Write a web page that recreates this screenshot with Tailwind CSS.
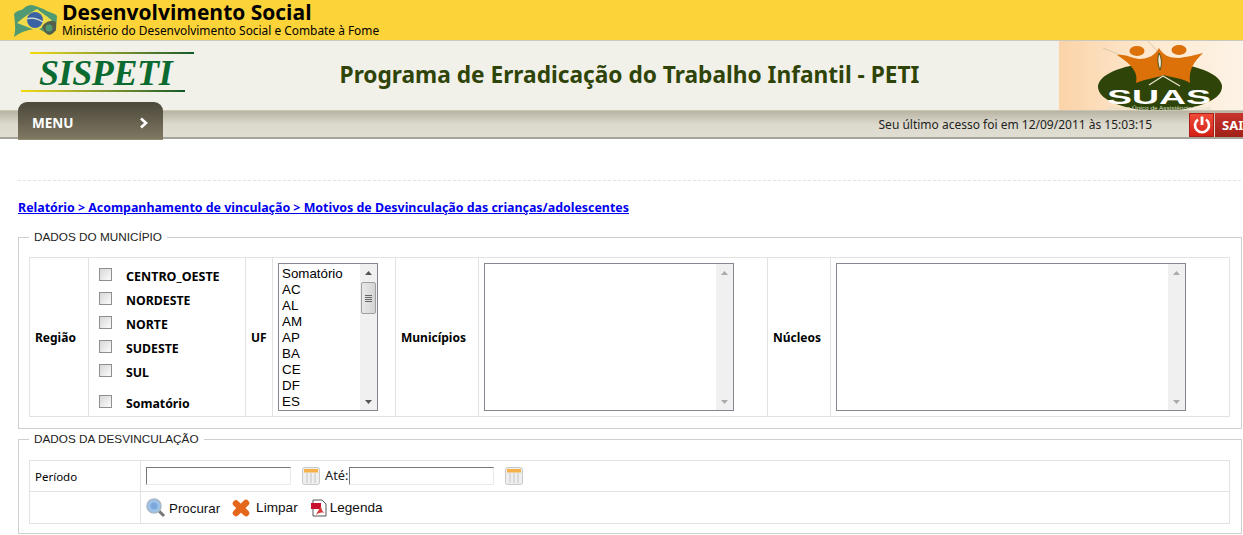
<!DOCTYPE html>
<html lang="pt">
<head>
<meta charset="utf-8">
<script src="https://cdn.jsdelivr.net/npm/@tailwindcss/browser@4"></script>
</head>
<body class="bg-white overflow-hidden h-[535px] font-['Noto_Sans',sans-serif] text-[12px] text-black">
<header class="h-[41px] bg-[#fdd33a] border-b border-[#c9c9bd] flex pl-[14px]">
  <svg width="44" height="36" viewBox="0 0 44 36" class="mt-[2px]">
    <path d="M0 12 C3 8 6 9 9 7 C12 4 14 3 18 3 C24 5 28 6 33 9 C37 11 41 11 43 14 L42 28 C39 31 37 34 33 32 C28 28 24 26 20 27 C13 28 7 30 0 35 C2 28 1 20 0 12Z" fill="#4f9a73"/>
    <path d="M3 21 C10 15 16 11 23 7 C29 12 35 15 38 19 C32 23 27 26 23 29 C17 26 10 24 3 21Z" fill="#efdc4a"/>
    <circle cx="21" cy="18" r="8" fill="#3a62a5"/>
    <path d="M13 17 C18 15 24 17 29 20" stroke="#dfe6d0" stroke-width="1.2" fill="none"/>
    <path d="M28 25 C31 19 38 18 42 20 L42 28 C39 31 37 34 33 32 C31 30 29 28 28 25Z" fill="#55604c"/>
    <circle cx="35" cy="26" r="3.5" fill="#4f9a73"/>
  </svg>
  <div class="ml-[4px] pt-[1px]">
    <div class="font-['Open_Sans',sans-serif] font-bold text-[21px] leading-[22px] whitespace-nowrap">Desenvolvimento Social</div>
    <div class="text-[11.9px] leading-[14px] whitespace-nowrap">Ministério do Desenvolvimento Social e Combate à Fome</div>
  </div>
</header>
<section class="h-[69px] bg-[#f2f1e9] flex relative">
  <div class="w-[200px] shrink-0 pl-[21px] pt-[11px]">
    <div class="w-[164px] h-[2px] ml-[9px] bg-gradient-to-r from-[#f2dc00] to-[#0b5a2a]"></div>
    <div class="font-['Liberation_Serif',serif] italic font-bold text-[36px] leading-[36px] pt-px text-[#0b6a30] ml-[18px] h-[36px] tracking-[-0.4px]">SISPETI</div>
    <div class="w-[164px] h-[2px] bg-gradient-to-r from-[#f2dc00] to-[#0b5a2a]"></div>
  </div>
  <div class="flex-1 text-center font-bold text-[22.7px] leading-[28px] text-[#2f4408] pt-[20px] whitespace-nowrap">Programa de Erradicação do Trabalho Infantil - PETI</div>
  <div class="w-[184px] shrink-0 bg-gradient-to-r from-[#fbd3a8] via-[#fde9d0] to-[#fdf3e6] overflow-hidden">
    <svg width="184" height="69" viewBox="0 0 184 69">
      <path d="M44 7 L64 15 M89 0 L100 12" stroke="#d9c7a8" stroke-width="1" fill="none"/>
      <ellipse cx="101" cy="46" rx="62" ry="24" fill="#2f4408"/>
      <path d="M58 14 C66 13 72 17 80 18 C90 18 96 14 100 7 C104 14 110 17 120 17 C128 16 136 14 144 12 C136 20 129 28 131 42 C123 37 114 37 105 34 C97 37 86 38 77 42 C80 30 70 22 58 14Z" fill="#dc7009"/>
      <ellipse cx="78" cy="10" rx="7.5" ry="5" fill="#dc7009"/>
      <ellipse cx="120" cy="9" rx="7.5" ry="5" fill="#dc7009"/>
      <path d="M100 12 C98 18 99 24 101 29 C103 24 103 18 100 12Z" fill="#f5ead6" stroke="#2f4408" stroke-width="0.8"/>
      <path d="M90 44 L104 35 L121 45" stroke="#e8e2c8" stroke-width="1.3" fill="none"/>
      <text x="100" y="63" text-anchor="middle" font-family="Liberation Sans" font-weight="700" font-size="21" fill="#fff" textLength="104" lengthAdjust="spacingAndGlyphs">SUAS</text>
      <text x="100" y="68.5" text-anchor="middle" font-family="Liberation Sans" font-size="5" fill="#dfe0cc" textLength="104" lengthAdjust="spacingAndGlyphs">Sistema Único de Assistência Social</text>
    </svg>
  </div>
</section>
<nav class="h-[29px] border-t border-[#c9c6b4] border-b-2 border-b-[#a5a49c] bg-gradient-to-b from-[#b9b3a2] via-[#dcd9cd] to-[#e0ddd2] relative flex items-center justify-end">
  <a class="absolute left-[18px] top-[-9px] w-[145px] h-[38px] rounded-t-[9px] bg-gradient-to-b from-[#4c483a] to-[#7f7862] border-b border-[#8f8a70] text-white font-bold text-[13.5px] flex items-center justify-between pl-[14px] pr-[14px] pt-[5px]">
    <span>MENU</span>
    <svg width="10" height="12" viewBox="0 0 10 12"><path d="M2 1.5 L7 6 L2 10.5" fill="none" stroke="#fff" stroke-width="2.6"/></svg>
  </a>
  <span class="mr-[37px] text-[12px] text-[#222] mt-[2px]">Seu último acesso foi em 12/09/2011 às 15:03:15</span>
  <span class="flex h-[24px] w-[54px] shrink-0 mt-[1px] overflow-hidden">
    <span class="w-[25px] shrink-0 bg-gradient-to-b from-[#f04a38] to-[#d41f16] border border-[#a82018] flex items-center justify-center">
      <svg width="20" height="20" viewBox="0 0 20 20"><path d="M6 4.5 A7 7 0 1 0 14 4.5" fill="none" stroke="#fff" stroke-width="2.6"/><path d="M10 1.5 V10" stroke="#fff" stroke-width="2.8"/></svg>
    </span>
    <span class="min-w-0 w-[29px] ml-px bg-gradient-to-b from-[#c8352c] to-[#a02018] text-white font-bold text-[13px] pl-[7px] leading-[24px] whitespace-nowrap overflow-hidden">SAIR</span>
  </span>
</nav>
<main class="px-[18px]">
  <div class="mt-[41px] -mr-[16px] border-t border-dashed border-[#e2e2e2]"></div>
  <a class="block mt-[18px] text-[#0000ee] underline font-bold text-[12.4px] leading-[17px] whitespace-nowrap">Relatório &gt; Acompanhamento de vinculação &gt; Motivos de Desvinculação das crianças/adolescentes</a>

  <fieldset class="mt-[14px] w-[1224px] h-[199px] border border-[#cfcfcf] px-[10px] pt-[12px]">
    <legend class="px-[5px] pb-[2px] ml-0 font-['Liberation_Sans',sans-serif] text-[11.75px] leading-[13px] text-[#222]">DADOS DO MUNICÍPIO</legend>
    <table class="table-fixed border-collapse w-[1201px] h-[160px] font-bold">
      <colgroup><col class="w-[59px]"><col class="w-[157px]"><col class="w-[27px]"><col class="w-[123px]"><col class="w-[83px]"><col class="w-[289px]"><col class="w-[63px]"><col></colgroup>
      <tr>
        <td class="border border-[#e2e2e2] pl-[5px] pt-[2px]">Região</td>
        <td class="border border-[#e2e2e2] pl-[10px] align-top pt-[7px]">
          <div class="h-[24px] flex"><span class="w-[13px] h-[13px] mt-[3px] border border-[#8f8f8f] bg-gradient-to-br from-[#d8d8d8] to-[#fafafa]"></span><span class="ml-[14px] leading-[24px] text-[12.5px]">CENTRO_OESTE</span></div>
          <div class="h-[24px] flex"><span class="w-[13px] h-[13px] mt-[3px] border border-[#8f8f8f] bg-gradient-to-br from-[#d8d8d8] to-[#fafafa]"></span><span class="ml-[14px] leading-[24px] text-[12.3px]">NORDESTE</span></div>
          <div class="h-[24px] flex"><span class="w-[13px] h-[13px] mt-[3px] border border-[#8f8f8f] bg-gradient-to-br from-[#d8d8d8] to-[#fafafa]"></span><span class="ml-[14px] leading-[24px] text-[12.3px]">NORTE</span></div>
          <div class="h-[24px] flex"><span class="w-[13px] h-[13px] mt-[3px] border border-[#8f8f8f] bg-gradient-to-br from-[#d8d8d8] to-[#fafafa]"></span><span class="ml-[14px] leading-[24px] text-[12.3px]">SUDESTE</span></div>
          <div class="h-[31px] flex"><span class="w-[13px] h-[13px] mt-[3px] border border-[#8f8f8f] bg-gradient-to-br from-[#d8d8d8] to-[#fafafa]"></span><span class="ml-[14px] leading-[24px] text-[12.3px]">SUL</span></div>
          <div class="h-[20px] flex"><span class="w-[13px] h-[13px] mt-[3px] border border-[#8f8f8f] bg-gradient-to-br from-[#d8d8d8] to-[#fafafa]"></span><span class="ml-[14px] leading-[24px] text-[12.3px]">Somatório</span></div>
        </td>
        <td class="border border-[#e2e2e2] pl-[5px] pt-[2px]">UF</td>
        <td class="border border-[#e2e2e2] pl-[5px]">
          <div class="w-[100px] h-[148px] border border-[#828790] flex font-normal font-['Liberation_Sans',sans-serif] text-[13.33px] leading-[16px]">
            <div class="flex-1 pl-[3px] pt-[2px] overflow-hidden"><div>Somatório</div><div>AC</div><div>AL</div><div>AM</div><div>AP</div><div>BA</div><div>CE</div><div>DF</div><div>ES</div></div>
            <div class="w-[17px] bg-[#f0f0f0] flex flex-col items-center">
              <svg width="9" height="18" viewBox="0 0 9 18" class="shrink-0"><path d="M1 11 L4.5 7 L8 11Z" fill="#555"/></svg>
              <div class="w-[15px] h-[32px] bg-gradient-to-r from-[#e8e8e8] to-[#d4d4d4] border border-[#a0a0a0] rounded-[2px] flex flex-col items-center justify-center gap-[1px]"><i class="w-[7px] h-px bg-[#666]"></i><i class="w-[7px] h-px bg-[#666]"></i><i class="w-[7px] h-px bg-[#666]"></i><i class="w-[7px] h-px bg-[#666]"></i></div>
              <div class="flex-1"></div>
              <svg width="9" height="16" viewBox="0 0 9 16" class="shrink-0"><path d="M1 6 L4.5 10 L8 6Z" fill="#555"/></svg>
            </div>
          </div>
        </td>
        <td class="border border-[#e2e2e2] pl-[5px] pt-px">Municípios</td>
        <td class="border border-[#e2e2e2] pl-[5px]">
          <div class="w-[250px] h-[148px] border border-[#828790] flex justify-end">
            <div class="w-[17px] bg-[#f0f0f0] flex flex-col items-center justify-between">
              <svg width="9" height="18" viewBox="0 0 9 18"><path d="M1 11 L4.5 7 L8 11Z" fill="#aaa"/></svg>
              <svg width="9" height="16" viewBox="0 0 9 16"><path d="M1 6 L4.5 10 L8 6Z" fill="#aaa"/></svg>
            </div>
          </div>
        </td>
        <td class="border border-[#e2e2e2] pl-[5px] pt-px">Núcleos</td>
        <td class="border border-[#e2e2e2] pl-[5px]">
          <div class="w-[350px] h-[148px] border border-[#828790] flex justify-end">
            <div class="w-[17px] bg-[#f0f0f0] flex flex-col items-center justify-between">
              <svg width="9" height="18" viewBox="0 0 9 18"><path d="M1 11 L4.5 7 L8 11Z" fill="#aaa"/></svg>
              <svg width="9" height="16" viewBox="0 0 9 16"><path d="M1 6 L4.5 10 L8 6Z" fill="#aaa"/></svg>
            </div>
          </div>
        </td>
      </tr>
    </table>
  </fieldset>

  <fieldset class="mt-[3px] w-[1224px] h-[102px] border border-[#cfcfcf] px-[10px] pt-[13px]">
    <legend class="px-[5px] pb-[2px] ml-0 font-['Liberation_Sans',sans-serif] text-[11.75px] leading-[13px] text-[#222]">DADOS DA DESVINCULAÇÃO</legend>
    <table class="table-fixed border-collapse w-[1201px]">
      <colgroup><col class="w-[111px]"><col></colgroup>
      <tr class="h-[31px]">
        <td class="border border-[#e2e2e2] pl-[5px] pt-px text-[11.5px]">Período</td>
        <td class="border border-[#e2e2e2] pl-[5px]">
          <div class="flex items-center">
            <span class="w-[145px] h-[18px] border border-[#eaeaea] border-t-[#777] border-l-[#777]"></span>
            <svg width="18" height="18" viewBox="0 0 18 18" class="ml-[11px]"><rect x="0.5" y="0.5" width="17" height="17" rx="2" fill="#efefef" stroke="#c9c9c9"/><rect x="2" y="2" width="14" height="3.5" fill="#f5b04a"/><path d="M5 6V16M9 6V16M13 6V16" stroke="#c4c4c4"/></svg>
            <span class="ml-[5px] text-[#222] text-[12.8px]">Até:</span>
            <span class="ml-px w-[145px] h-[18px] border border-[#eaeaea] border-t-[#777] border-l-[#777]"></span>
            <svg width="18" height="18" viewBox="0 0 18 18" class="ml-[11px]"><rect x="0.5" y="0.5" width="17" height="17" rx="2" fill="#efefef" stroke="#c9c9c9"/><rect x="2" y="2" width="14" height="3.5" fill="#f5b04a"/><path d="M5 6V16M9 6V16M13 6V16" stroke="#c4c4c4"/></svg>
          </div>
        </td>
      </tr>
      <tr class="h-[32px]">
        <td class="border border-[#e2e2e2]"></td>
        <td class="border border-[#e2e2e2] pl-[5px] pt-[2px]">
          <div class="flex items-center text-[13.33px] font-['Liberation_Sans',sans-serif] text-[#111]">
            <svg width="20" height="20" viewBox="0 0 20 20"><path d="M12 12 L18 18" stroke="#777" stroke-width="3"/><circle cx="8" cy="8" r="7" fill="#9dc3e8" stroke="#a8b8c8" stroke-width="1.5"/><circle cx="8" cy="8" r="3.5" fill="#7ba7dc"/></svg>
            <span class="ml-[3px]">Procurar</span>
            <svg width="18" height="18" viewBox="0 0 18 18" class="ml-[12px]"><path d="M4 4.5 L14 14 M14 4 L4 14" stroke="#e4671c" stroke-width="6.5" stroke-linecap="round"/></svg>
            <span class="ml-[6px] text-[13.6px]">Limpar</span>
            <svg width="17" height="18" viewBox="0 0 17 18" class="ml-[12px]"><path d="M3 1H12L16 5V17H3Z" fill="#fff" stroke="#555"/><rect x="1" y="4" width="10" height="6" fill="#c8102e"/><path d="M6 16C9 10 10 9 11 6C11 11 13 13 15 14C11 13 8 14 6 16Z" fill="#d83a3a"/></svg>
            <span class="ml-[3px] text-[13.6px]">Legenda</span>
          </div>
        </td>
      </tr>
    </table>
  </fieldset>
</main>
</body>
</html>
